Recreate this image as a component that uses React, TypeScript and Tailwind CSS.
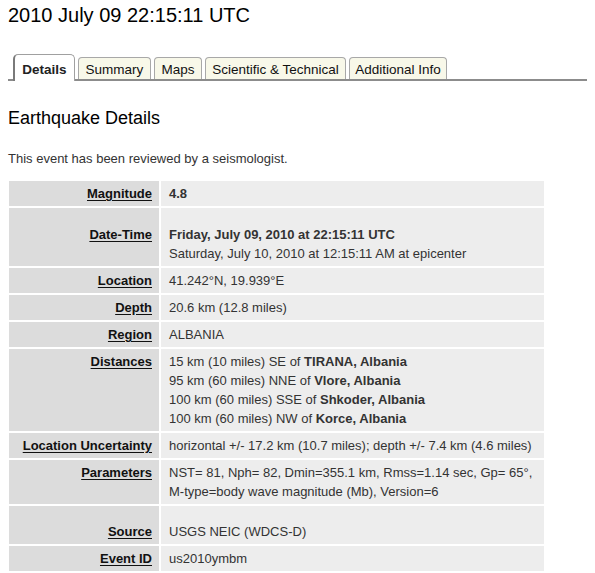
import type { ReactNode } from "react"

type Row = { label: string; value: ReactNode; extraTop?: boolean }

const rows: Row[] = [
  { label: "Magnitude", value: <b>4.8</b> },
  {
    label: "Date-Time",
    extraTop: true,
    value: (
      <>
        <b>Friday, July 09, 2010 at 22:15:11 UTC</b>
        <br />
        Saturday, July 10, 2010 at 12:15:11 AM at epicenter
      </>
    ),
  },
  { label: "Location", value: "41.242°N, 19.939°E" },
  { label: "Depth", value: "20.6 km (12.8 miles)" },
  { label: "Region", value: "ALBANIA" },
  {
    label: "Distances",
    value: (
      <>
        15 km (10 miles) SE of <b>TIRANA, Albania</b>
        <br />
        95 km (60 miles) NNE of <b>Vlore, Albania</b>
        <br />
        100 km (60 miles) SSE of <b>Shkoder, Albania</b>
        <br />
        100 km (60 miles) NW of <b>Korce, Albania</b>
      </>
    ),
  },
  {
    label: "Location Uncertainty",
    value: "horizontal +/- 17.2 km (10.7 miles); depth +/- 7.4 km (4.6 miles)",
  },
  {
    label: "Parameters",
    value: (
      <>
        NST= 81, Nph= 82, Dmin=355.1 km, Rmss=1.14 sec, Gp= 65°,
        <br />
        M-type=body wave magnitude (Mb), Version=6
      </>
    ),
  },
  { label: "Source", extraTop: true, value: "USGS NEIC (WDCS-D)" },
  { label: "Event ID", value: "us2010ymbm" },
]

const tabs = [
  { name: "Summary", w: "w-[73px]" },
  { name: "Maps", w: "w-[48px]" },
  { name: "Scientific & Technical", w: "w-[141px]" },
  { name: "Additional Info", w: "w-[98px]" },
]

export default function App() {
  return (
    <div className="w-[595px] h-[573px] overflow-hidden bg-white px-2 font-['Liberation_Sans',Arial,sans-serif] text-black">
      <h1 className="pt-[3px] text-[20px] leading-[24px]">2010 July 09 22:15:11 UTC</h1>

      {/* tab strip */}
      <div className="mt-[27px] flex items-end gap-[3px] border-b-2 border-[#8c8c8c] pl-[5px] h-[27px]">
        <div className="relative -mb-[2px] h-[27px] w-[62px] rounded-t-[5px] border border-b-0 border-[#a0a0a0] border-l-2 border-l-[#7a7a7a] bg-white text-center text-[13.5px] font-bold leading-[29px] text-[#222]">
          Details
        </div>
        {tabs.map((t) => (
          <div
            key={t.name}
            className={`${t.w} h-[22px] rounded-t-[4px] border border-b-0 border-[#a8a8a8] bg-[#f8f8e9] text-center text-[13.5px] leading-[23px] text-[#111]`}
          >
            {t.name}
          </div>
        ))}
      </div>

      <h2 className="mt-[26px] text-[18px] leading-[22px]">Earthquake Details</h2>

      <p className="mt-[22px] text-[13px] leading-[15px] text-[#333]">
        This event has been reviewed by a seismologist.
      </p>

      <div className="mt-[15px] ml-px grid grid-cols-[150px_383px] gap-[2px] text-[13px] leading-[19px]">
        {rows.map((r) => (
          <div key={r.label} className="contents">
            <div
              className={`bg-[#dcdcdc] px-[7px] py-[3px] text-right font-bold text-[#111] ${r.extraTop ? (r.label === "Source" ? "pt-[16px]" : "pt-[17px]") : ""}`}
            >
              <span className="underline underline-offset-[2px]">{r.label}</span>
            </div>
            <div
              className={`bg-[#ededed] px-[8px] py-[3px] text-[#333] ${r.extraTop ? (r.label === "Source" ? "pt-[16px]" : "pt-[17px]") : ""}`}
            >
              {r.value}
            </div>
          </div>
        ))}
      </div>
    </div>
  )
}
